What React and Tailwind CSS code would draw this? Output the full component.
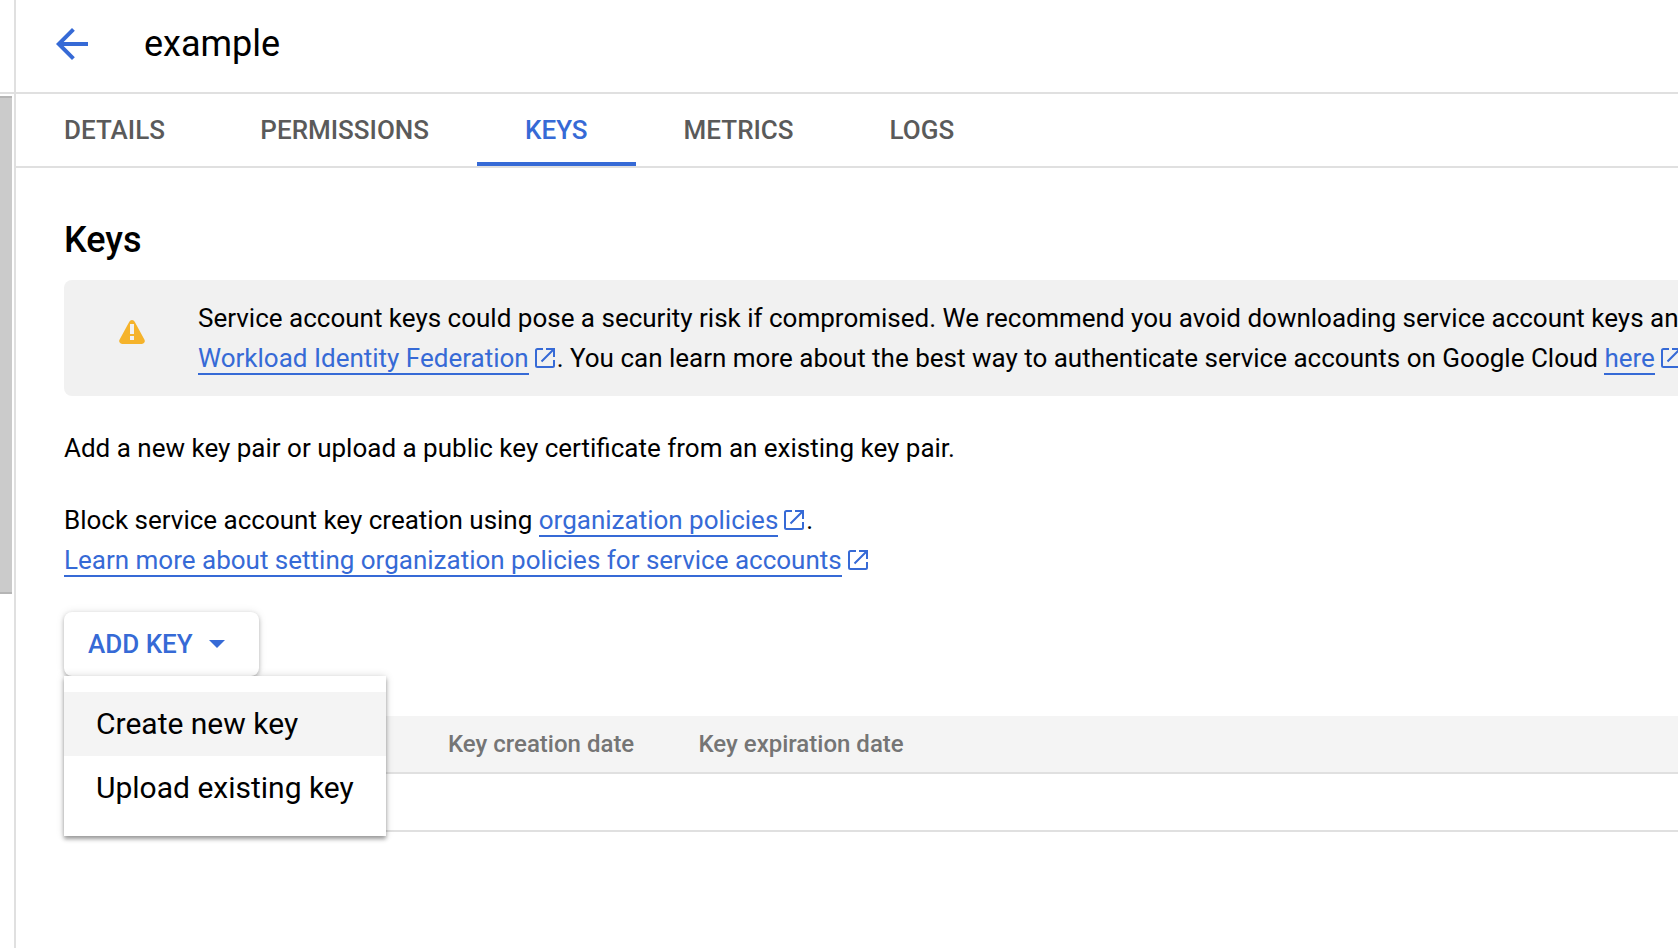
const tabs = [
  { label: "DETAILS" },
  { label: "PERMISSIONS" },
  { label: "KEYS", active: true },
  { label: "METRICS" },
  { label: "LOGS" },
];

function ExternalIcon() {
  return (
    <svg className="mr-0.5 ml-1.5 inline-block size-5 align-[-1px]" viewBox="0 0 20 20" fill="none" stroke="#366ad6" strokeWidth="2">
      <path d="M8 1H2.5A1.5 1.5 0 0 0 1 2.5v15A1.5 1.5 0 0 0 2.5 19h15a1.5 1.5 0 0 0 1.5-1.5V12" />
      <path d="M11 1h8v8M19 1L6.5 13.5" />
    </svg>
  );
}

function ExternalLink({ children }) {
  return (
    <>
      <a className="border-b-2 border-[#366ad6] text-[#366ad6]">{children}</a>
      <ExternalIcon />
    </>
  );
}

function AddKeyMenu() {
  return (
    <div className="relative z-10 mt-8 w-fit">
      <button className="flex h-16 w-[195px] items-center rounded-lg bg-white pl-6 text-[26px] font-medium text-[#366ad6] shadow-[0_2px_4px_rgba(0,0,0,0.25),0_0_8px_rgba(0,0,0,0.1)]">
        ADD KEY
        <svg className="ml-4 h-2 w-4" viewBox="0 0 16 8" fill="#366ad6">
          <path d="M0 0h16L8 8z" />
        </svg>
      </button>
      <ul className="absolute top-full left-0 h-40 w-[322px] bg-white py-4 text-[30px] shadow-[0_3px_4px_rgba(0,0,0,0.35),0_0_8px_rgba(0,0,0,0.15)]">
        <li className="flex h-16 items-center bg-[#f4f4f4] px-8 pb-0.5 whitespace-nowrap">Create new key</li>
        <li className="flex h-16 items-center px-8 pb-0.5 whitespace-nowrap">Upload existing key</li>
      </ul>
    </div>
  );
}

export default function App() {
  return (
    <div className="flex h-[948px] w-full overflow-hidden bg-white font-[Roboto,sans-serif] text-black">
      <aside className="flex w-4 shrink-0 flex-col border-r-2 border-[#e0e0e0]">
        <div className="h-[94px] shrink-0 border-b-2 border-[#e0e0e0]" />
        <div className="mt-0.5 h-[498px] w-3 border-y-2 border-[#b5b5b5] bg-[#cbcbcb]" />
      </aside>
      <main className="min-w-0 flex-1 overflow-hidden">
        <header className="flex h-[94px] items-center border-b-2 border-[#e0e0e0] pb-1 pl-8">
          <svg className="size-12" viewBox="0 0 24 24" fill="#366ad6">
            <path d="M20 11H7.83l5.59-5.59L12 4l-8 8 8 8 1.41-1.41L7.83 13H20v-2z" />
          </svg>
          <h1 className="ml-12 text-[36px]">example</h1>
        </header>
        <nav className="flex h-[74px] border-b-2 border-[#e0e0e0] text-[26px] font-medium text-[#5a5a5a]">
          {tabs.map((t) => (
            <a
              key={t.label}
              className={
                t.active
                  ? "flex items-center border-b-4 border-[#366ad6] px-12 pt-1 text-[#366ad6]"
                  : "flex items-center border-b-4 border-transparent px-12 pt-1 first:-mr-[0.6px]"
              }
            >
              {t.label}
            </a>
          ))}
        </nav>
        <div className="pt-[48px] pl-12">
          <h2 className="text-[36px] leading-[48px] font-medium">Keys</h2>
          <section className="mt-4 flex h-[116px] rounded-l-lg bg-[#f1f1f1] py-[18px] text-[26px] leading-10 whitespace-nowrap">
            <svg className="mt-[22px] ml-[55px] h-6 w-[26px] shrink-0" viewBox="0 0 26 24">
              <path d="M13 0a3 3 0 0 1 2.7 1.7l9.8 18a3 3 0 0 1-2.7 4.3H3.2a3 3 0 0 1-2.7-4.3l9.8-18A3 3 0 0 1 13 0z" fill="#f5b32b" />
              <path d="M11 4h4v10h-4zM11 16h4v4h-4z" fill="#f1f1f1" />
            </svg>
            <p className="ml-[53px]">
              Service account keys could pose a security risk if compromised. We recommend you avoid downloading service account keys an
              <br />
              <ExternalLink>Workload Identity Federation</ExternalLink>. You can learn more about the best way to authenticate service accounts on Google Cloud{" "}
              <ExternalLink>here</ExternalLink>
            </p>
          </section>
          <p className="mt-8 text-[26px] leading-10">Add a new key pair or upload a public key certificate from an existing key pair.</p>
          <p className="mt-8 text-[26px] leading-10">
            Block service account key creation using <ExternalLink>organization policies</ExternalLink>.
            <br />
            <ExternalLink>Learn more about setting organization policies for service accounts</ExternalLink>
          </p>
          <AddKeyMenu />
          <div className="mt-10">
            <div className="flex h-[58px] items-center border-b-2 border-[#e0e0e0] bg-[#f4f4f4] pl-96 text-2xl font-medium text-[#757575]">
              <span className="w-[250.5px]">Key creation date</span>
              <span>Key expiration date</span>
            </div>
            <div className="h-[58px] border-b-2 border-[#e0e0e0]" />
          </div>
        </div>
      </main>
    </div>
  );
}
